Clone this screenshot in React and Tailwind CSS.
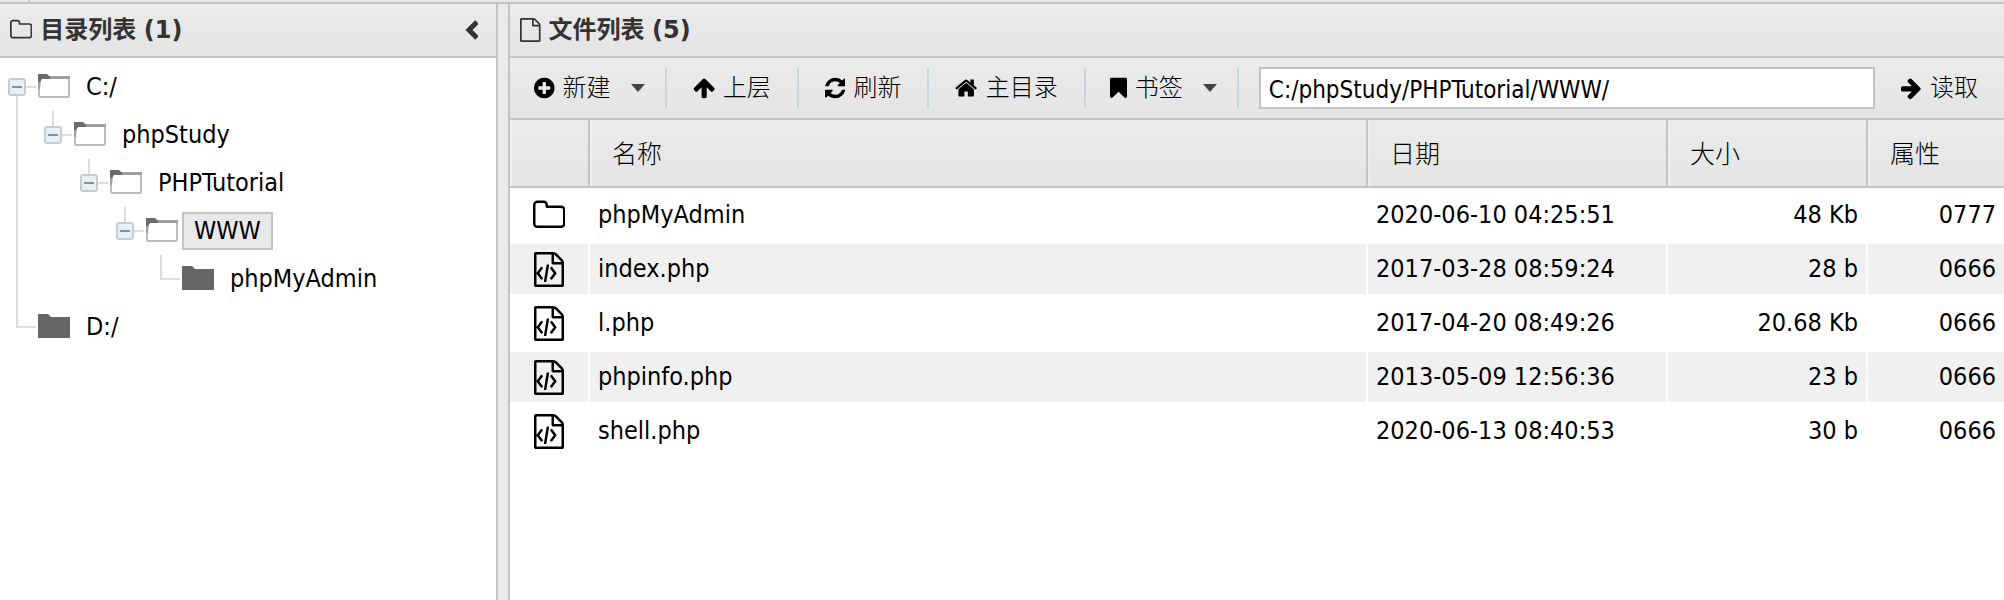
import React, { useState } from 'react';

// x / w: horizontal crop of the 1792 unit box, so that every icon keeps its own width
const ICONS = {
    plusCircle: { x: 128, w: 1536, d: 'M1344 960v-128q0-26-19-45t-45-19h-256v-256q0-26-19-45t-45-19h-128q-26 0-45 19t-19 45v256h-256q-26 0-45 19t-19 45v128q0 26 19 45t45 19h256v256q0 26 19 45t45 19h128q26 0 45-19t19-45v-256h256q26 0 45-19t19-45zm320-64q0 209-103 385.5t-279.5 279.5-385.5 103-385.5-103-279.5-279.5-103-385.5 103-385.5 279.5-279.5 385.5-103 385.5 103 279.5 279.5 103 385.5z' },
    arrowUp: { x: 64, w: 1664, d: 'M1675 971q0 51-37 90l-75 75q-38 38-91 38-54 0-90-38l-294-293v704q0 52-37.5 84.5t-90.5 32.5h-128q-53 0-90.5-32.5t-37.5-84.5v-704l-294 293q-36 38-90 38t-90-38l-75-75q-38-38-38-90 0-53 38-91l651-651q35-37 90-37 54 0 91 37l651 651q37 39 37 91z' },
    refresh: { x: 128, w: 1536, d: 'M1639 1056q0 5-1 7-64 268-268 434.5t-478 166.5q-146 0-282.5-55t-243.5-157l-129 129q-19 19-45 19t-45-19-19-45v-448q0-26 19-45t45-19h448q26 0 45 19t19 45-19 45l-137 137q71 66 161 102t187 36q134 0 250-65t186-179q11-17 53-117 8-23 30-23h192q13 0 22.5 9.5t9.5 22.5zm25-800v448q0 26-19 45t-45 19h-448q-26 0-45-19t-19-45 19-45l138-138q-148-137-349-137-134 0-250 65t-186 179q-11 17-53 117-8 23-30 23h-199q-13 0-22.5-9.5t-9.5-22.5v-7q65-268 270-434.5t480-166.5q146 0 284 55.5t245 156.5l130-129q19-19 45-19t45 19 19 45z' },
    home: { x: 64, w: 1664, d: 'M1472 992v480q0 26-19 45t-45 19h-384v-384h-256v384h-384q-26 0-45-19t-19-45v-480q0-1 .5-3t.5-3l575-474 575 474q1 2 1 6zm223-69l-62 74q-8 9-21 11h-3q-13 0-21-7l-692-577-692 577q-12 8-24 7-13-2-21-11l-62-74q-8-10-7-23.5t11-21.5l719-599q32-26 76-26t76 26l244 204v-195q0-14 9-23t23-9h192q14 0 23 9t9 23v408l219 182q10 8 11 21.5t-7 23.5z' },
    bookmark: { x: 256, w: 1280, d: 'M1420 128q23 0 44 9 33 13 52.5 41t19.5 62v1289q0 34-19.5 62t-52.5 41q-19 8-44 8-48 0-83-32l-441-424-441 424q-36 33-83 33-23 0-44-9-33-13-52.5-41t-19.5-62v-1289q0-34 19.5-62t52.5-41q21-9 44-9h1048z' },
    arrowRight: { x: 128, w: 1536, d: 'M1600 960q0 54-37 91l-651 651q-39 37-91 37-51 0-90-37l-75-75q-38-38-38-91t38-91l293-293h-704q-52 0-84.5-37.5t-32.5-90.5v-128q0-53 32.5-90.5t84.5-37.5h704l-293-294q-38-36-38-90t38-90l75-75q38-38 90-38 53 0 91 38l651 651q37 35 37 90z' },
    folder: { x: 64, w: 1664, d: 'M1600 1312v-704q0-40-28-68t-68-28h-704q-40 0-68-28t-28-68v-64q0-40-28-68t-68-28h-320q-40 0-68 28t-28 68v960q0 40 28 68t68 28h1216q40 0 68-28t28-68zm128-704v704q0 92-66 158t-158 66h-1216q-92 0-158-66t-66-158v-960q0-92 66-158t158-66h320q92 0 158 66t66 158v32h672q92 0 158 66t66 158z' },
    file: { x: 128, w: 1536, d: 'M1596 380q28 28 48 76t20 88v1152q0 40-28 68t-68 28h-1344q-40 0-68-28t-28-68v-1600q0-40 28-68t68-28h896q40 0 88 20t76 48zm-444-244v376h376q-10-29-22-41l-313-313q-12-12-41-22zm384 1528v-1024h-416q-40 0-68-28t-28-68v-416h-768v1536h1280z' },
    fileCode: { x: 128, w: 1536, d: 'M1596 380q28 28 48 76t20 88v1152q0 40-28 68t-68 28h-1344q-40 0-68-28t-28-68v-1600q0-40 28-68t68-28h896q40 0 88 20t76 48zm-444-244v376h376q-10-29-22-41l-313-313q-12-12-41-22zm384 1528v-1024h-416q-40 0-68-28t-28-68v-416h-768v1536h1280zm-1056-896q8-11 21-12.5t24 6.5l51 38q11 8 12.5 21t-6.5 24l-182 243 182 243q8 11 6.5 24t-12.5 21l-51 38q-11 8-24 6.5t-21-12.5l-226-301q-14-19 0-38zm802 301q14 19 0 38l-226 301q-8 11-21 12.5t-24-6.5l-51-38q-11-8-12.5-21t6.5-24l182-243-182-243q-8-11-6.5-24t12.5-21l51-38q11-8 24-6.5t21 12.5zm-620 461q-13-2-20.5-13t-5.5-24l138-831q2-13 13-20.5t24-5.5l63 10q13 2 20.5 13t5.5 24l-138 831q-2 13-13 20.5t-24 5.5z' },
};

const TREE = [
    { name: 'C:/', guides: ['root'], open: true },
    { name: 'phpStudy', guides: ['line', 'minus'], open: true },
    { name: 'PHPTutorial', guides: ['line', 'blank', 'minus'], open: true },
    { name: 'WWW', guides: ['line', 'blank', 'blank', 'minus'], open: true },
    { name: 'phpMyAdmin', guides: ['line', 'blank', 'blank', 'blank', 'elbow'] },
    { name: 'D:/', guides: ['elbow'] },
];

const FILES = [
    { name: 'phpMyAdmin', date: '2020-06-10 04:25:51', size: '48 Kb', attr: '0777', dir: true },
    { name: 'index.php', date: '2017-03-28 08:59:24', size: '28 b', attr: '0666' },
    { name: 'l.php', date: '2017-04-20 08:49:26', size: '20.68 Kb', attr: '0666' },
    { name: 'phpinfo.php', date: '2013-05-09 12:56:36', size: '23 b', attr: '0666' },
    { name: 'shell.php', date: '2020-06-13 08:40:53', size: '30 b', attr: '0666' },
];

const Icon = ({ name, className = 'h-6' }) => {
    const { x, w, d } = ICONS[name];
    return (
        <svg viewBox={`${x} 0 ${w} 1792`} fill="currentColor" className={`w-auto shrink-0 ${className}`} aria-hidden="true">
            <path d={d} />
        </svg>
    );
};

const Guide = ({ type }) => (
    <svg viewBox="0 0 36 48" className="w-9 h-12 shrink-0" aria-hidden="true">
        <g fill="#dcdede">
            {type === 'line' && <rect x="16" y="0" width="2" height="48" />}
            {type === 'root' && <rect x="16" y="30" width="2" height="18" />}
            {type === 'minus' && <rect x="16" y="0" width="2" height="18" />}
            {type === 'elbow' && <rect x="16" y="0" width="2" height="25" />}
            {type !== 'line' && type !== 'blank' && <rect x="16" y="23" width="20" height="2" />}
        </g>
        {(type === 'root' || type === 'minus') && (
            <>
                <rect x="9" y="16" width="16" height="16" rx="2" fill="#e9f0f4" stroke="#c5cdd0" strokeWidth="2" />
                <rect x="12" y="23" width="10" height="2" fill="#7d93a8" />
            </>
        )}
    </svg>
);

const TreeFolder = ({ open }) => (
    <svg viewBox="0 0 38 48" className="w-[38px] h-12 shrink-0" aria-hidden="true">
        {open ? (
            <>
                <rect x="3" y="14" width="30" height="20" rx="1" fill="#fff" stroke="#bdbdbd" strokeWidth="2" />
                <path d="M2 13h32v3h-29l-1 10h-2z" fill="#a0a0a0" />
                <path d="M2 11h9l3 3v2h-8l-2 3h-2z" fill="#6a6a6a" />
            </>
        ) : (
            <path d="M2 11h10l3 3h19v21h-32z" fill="#666" />
        )}
    </svg>
);

const PanelTitle = ({ icon, text, count, children }) => (
    <header className="flex h-[54px] shrink-0 items-center gap-2 border-b-2 border-[#c3c3c3] bg-linear-to-b from-[#ebebeb] to-[#e4e4e4] px-2.5 text-[#333]">
        <Icon name={icon} />
        <h2 className="grow text-2xl font-bold">
            {text} <span className="font-['DejaVu_Sans']">({count})</span>
        </h2>
        {children}
    </header>
);

const ToolButton = ({ icon, label, menu }) => (
    <button type="button" className={`flex shrink-0 items-center gap-2 text-2xl font-light ${menu ? 'pl-6 pr-5' : 'px-[26px]'}`}>
        <Icon name={icon} />
        {label}
        {menu && (
            <svg viewBox="0 0 14 8" className="ml-3 w-3.5 h-2 text-[#444]" aria-hidden="true">
                <path d="M0 0h14l-7 8z" fill="currentColor" />
            </svg>
        )}
    </button>
);

const Separator = () => <span className="h-10 w-0.5 shrink-0 bg-[#c9d6d9]" />;

const DirectoryPanel = () => {
    const [selected, setSelected] = useState(3);

    return (
        <aside className="flex w-[498px] shrink-0 flex-col border-r-2 border-[#c3c3c3]">
            <PanelTitle icon="folder" text="目录列表" count={1}>
                <button type="button" aria-label="收起" className="mr-2">
                    <svg viewBox="0 0 14 20" className="w-3.5 h-5" fill="none" stroke="#333" strokeWidth="5" aria-hidden="true">
                        <path d="M13 2l-8 8 8 8" />
                    </svg>
                </button>
            </PanelTitle>
            <ul className="pt-[5px]">
                {TREE.map((node, i) => (
                    <li key={i} className="flex h-12 items-center">
                        {node.guides.map((type, j) => <Guide key={j} type={type} />)}
                        <TreeFolder open={node.open} />
                        <button
                            type="button"
                            onClick={() => setSelected(i)}
                            className={`h-[38px] border-2 px-2.5 text-[25px] leading-[34px] ${selected === i ? 'border-[#c3c3c3] bg-[#e8e8e8]' : 'border-transparent'}`}
                        >
                            {node.name}
                        </button>
                    </li>
                ))}
            </ul>
        </aside>
    );
};

const FilePanel = () => (
    <main className="flex min-w-0 grow flex-col border-l-2 border-[#c3c3c3]">
        <PanelTitle icon="file" text="文件列表" count={FILES.length} />
        <div className="flex h-[62px] shrink-0 items-center border-b-2 border-[#c3c3c3] bg-linear-to-b from-[#ebebeb] to-[#e4e4e4]">
            <ToolButton icon="plusCircle" label="新建" menu />
            <Separator />
            <ToolButton icon="arrowUp" label="上层" />
            <Separator />
            <ToolButton icon="refresh" label="刷新" />
            <Separator />
            <ToolButton icon="home" label="主目录" />
            <Separator />
            <ToolButton icon="bookmark" label="书签" menu />
            <Separator />
            <input
                type="text"
                aria-label="路径"
                defaultValue="C:/phpStudy/PHPTutorial/WWW/"
                className="ml-5 h-[42px] min-w-0 grow border-2 border-[#c3c3c3] bg-white px-2 pt-1 text-2xl"
            />
            <ToolButton icon="arrowRight" label="读取" />
        </div>
        <table className="w-full table-fixed border-separate border-spacing-0 text-[25px]">
            <colgroup>
                <col className="w-20" />
                <col />
                <col className="w-[300px]" />
                <col className="w-[200px]" />
                <col className="w-[136px]" />
            </colgroup>
            <thead>
                <tr className="h-[68px] bg-linear-to-b from-[#ebebeb] to-[#e4e4e4]">
                    {['', '名称', '日期', '大小', '属性'].map((title, i) => (
                        <th key={i} scope="col" className="border-r-2 border-b-2 border-[#c3c3c3] px-[22px] pt-1 pb-0 text-left font-light shadow-[inset_2px_0_#eeeeee] last:border-r-0">
                            {title}
                        </th>
                    ))}
                </tr>
            </thead>
            <tbody>
                {FILES.map((file) => (
                    <tr key={file.name} className="h-[54px] *:border-y-2 *:border-r-2 *:border-white *:px-2 *:py-0 *:last:border-r-0 even:bg-[#f0f0f0]">
                        <td>
                            <Icon name={file.dir ? 'folder' : 'fileCode'} className="mx-auto h-[35px]" />
                        </td>
                        <td>{file.name}</td>
                        <td>{file.date}</td>
                        <td className="text-right">{file.size}</td>
                        <td className="text-right">{file.attr}</td>
                    </tr>
                ))}
            </tbody>
        </table>
    </main>
);

const App = () => (
    <div className="flex h-screen flex-col overflow-hidden bg-white font-['DejaVu_Sans_Condensed','DejaVu_Sans','Noto_Sans_CJK_SC',sans-serif] text-black">
        <div className="h-1 shrink-0 border-b-2 border-[#c3c3c3] bg-[#e8e8e8]">
            <div className="h-0.5 w-[30px] border-r-2 border-[#c3c3c3]" />
        </div>
        <div className="flex min-h-0 grow">
            <DirectoryPanel />
            <div className="w-2.5 shrink-0 bg-[#eaeaea]" />
            <FilePanel />
        </div>
    </div>
);

export default App;
